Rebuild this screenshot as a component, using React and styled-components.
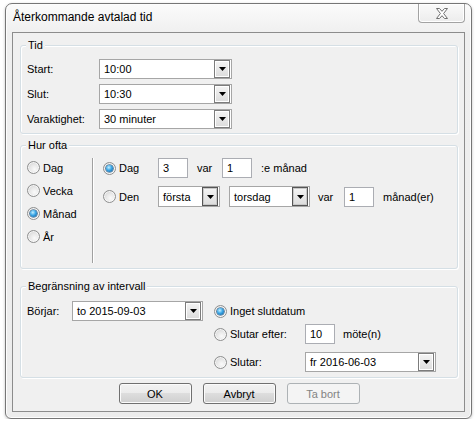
import React from 'react';
import styled, { createGlobalStyle, css } from 'styled-components';

const Global = createGlobalStyle`
  html, body { margin: 0; padding: 0; background: #fff; }
  body {
    font-family: "Liberation Sans", Arial, sans-serif;
    font-size: 11px;
    color: #000;
  }
  * { box-sizing: border-box; }
`;

const Page = styled.div`
  padding: 3px 0 0 5px;
`;

const Window = styled.div`
  width: 467px;
  height: 416px;
  border: 1px solid #767676;
  border-radius: 7px 7px 6px 6px;
  background: linear-gradient(#fbfbfb, #efefef 30px, #ececec);
  box-shadow: inset 0 0 0 1px #fdfdfd, 0 1px 3px rgba(0, 0, 0, 0.25);
  padding: 0 6px 6px;
  display: flex;
  flex-direction: column;
`;

const TitleBar = styled.div`
  height: 28px;
  display: flex;
  justify-content: space-between;
  align-items: flex-start;
`;

const Title = styled.div`
  font-family: "Liberation Sans", Arial, sans-serif;
  font-size: 12px;
  line-height: 14px;
  padding: 6px 0 0 1px;
  color: #000;
`;

const CloseButton = styled.div`
  width: 47px;
  height: 19px;
  border: 1px solid #a3a3a3;
  border-top: none;
  border-radius: 0 0 4px 4px;
  background: linear-gradient(#fafafa, #ececec);
  box-shadow: inset 0 0 0 1px #fff;
  display: flex;
  align-items: center;
  justify-content: center;
`;

const Client = styled.div`
  flex: 1;
  border: 1px solid #8c8c8c;
  background: #f0f0f0;
  padding: 0 6px 0 7px;
  display: flex;
  flex-direction: column;
`;

const Group = styled.div`
  position: relative;
  margin-top: ${(p) => p.$mt}px;
  height: ${(p) => p.$h}px;
  border: 1px solid #d5dfe5;
  border-radius: 3px;
  box-shadow: inset 1px 1px 0 #fff, 1px 1px 0 #fff;
  display: flex;
  flex-direction: column;
`;

const Legend = styled.span`
  position: absolute;
  top: -7px;
  left: 5px;
  padding: 0 2px;
  line-height: 13px;
  background: #f0f0f0;
  white-space: nowrap;
`;

const FormRow = styled.div`
  display: flex;
  align-items: center;
  height: ${(p) => p.$h || 20}px;
  margin-top: ${(p) => p.$mt || 0}px;
`;

const Text = styled.span`
  flex: none;
  width: ${(p) => (p.$w ? `${p.$w}px` : 'auto')};
  margin-left: ${(p) => p.$ml || 0}px;
  white-space: nowrap;
`;

const ComboBox = styled.div`
  flex: none;
  width: ${(p) => p.$w}px;
  height: ${(p) => p.$h || 20}px;
  margin-left: ${(p) => p.$ml || 0}px;
  border: 1px solid #a6a6a6;
  background: #fff;
  padding-right: 1px;
  display: flex;
  align-items: stretch;
`;

const ComboText = styled.span`
  flex: 1;
  padding-left: 4px;
  display: flex;
  align-items: center;
  white-space: nowrap;
  overflow: hidden;
`;

const DropButton = styled.span`
  width: 16px;
  flex: none;
  border: 1px solid ${(p) => (p.$dark ? '#555' : '#7c7c7c')};
  background: linear-gradient(#f4f4f4, #dcdcdc);
  box-shadow: inset 0 0 0 1px ${(p) => (p.$dark ? '#c8c8c8' : '#fff')};
  display: flex;
  align-items: center;
  justify-content: center;
`;

const TextBox = styled.div`
  flex: none;
  width: ${(p) => p.$w || 30}px;
  height: 20px;
  margin-left: ${(p) => p.$ml || 0}px;
  border: 1px solid #abadb3;
  background: #fff;
  padding-left: 4px;
  display: flex;
  align-items: center;
`;

const RadioLabel = styled.label`
  flex: none;
  display: flex;
  align-items: center;
  gap: 3px;
  white-space: nowrap;
  width: ${(p) => (p.$w ? `${p.$w}px` : 'auto')};
  height: ${(p) => (p.$h ? `${p.$h}px` : 'auto')};
`;

const RadioDot = styled.span`
  position: relative;
  flex: none;
  width: 13px;
  height: 13px;
  border-radius: 50%;
  border: 1px solid #8e8f8f;
  background: radial-gradient(circle at 60% 65%, #fafafa 0, #e8e8e8 45%, #c9c9c9 100%);
  box-shadow: inset 0 0 0 1px rgba(255, 255, 255, 0.7);
  ${(p) =>
    p.$on &&
    css`
      &::after {
        content: '';
        position: absolute;
        left: 2px;
        top: 2px;
        width: 7px;
        height: 7px;
        border-radius: 50%;
        background: radial-gradient(circle at 40% 35%, #c6f0ff 0, #3aa6e6 45%, #0c528f 100%);
        box-shadow: 0 0 0 0.6px #1a4d78;
      }
    `}
`;

const HurBody = styled.div`
  display: flex;
  flex: 1;
  padding: 10px 0 0 6px;
`;

const FreqColumn = styled.div`
  width: 65px;
  flex: none;
  display: flex;
  flex-direction: column;
`;

const PatternColumn = styled.div`
  flex: 1;
  margin: 2px 0 5px;
  border-left: 1px solid #a0a0a0;
  box-shadow: inset 1px 0 0 #fff;
  padding-left: 10px;
  display: flex;
  flex-direction: column;
`;

const TidBody = styled.div`
  display: flex;
  flex-direction: column;
  gap: 5px;
  padding: 13px 0 0 6px;
`;

const RangeBody = styled.div`
  display: flex;
  padding: 14px 0 0 6px;
  align-items: flex-start;
`;

const EndColumn = styled.div`
  margin-left: 11px;
  display: flex;
  flex-direction: column;
`;

const ButtonRow = styled.div`
  margin-top: 5px;
  display: flex;
  justify-content: center;
  gap: 11px;
`;

const Button = styled.div`
  width: 73px;
  height: 21px;
  border-radius: 3px;
  display: flex;
  align-items: center;
  justify-content: center;
  border: 1px solid #707070;
  background: linear-gradient(#f2f2f2 0%, #ebebeb 50%, #dddddd 50%, #cfcfcf 100%);
  box-shadow: inset 0 0 0 1px #fbfbfb;
  color: #000;
  ${(p) =>
    p.$disabled &&
    css`
      border-color: #adb2b5;
      background: #f4f4f4;
      box-shadow: none;
      color: #838383;
    `}
`;

const Arrow = () => (
  <svg width="7" height="4" viewBox="0 0 7 4">
    <polygon points="0,0 7,0 3.5,4" fill="#000" />
  </svg>
);

const Combo = ({ value, w, h, ml, dark }) => (
  <ComboBox $w={w} $h={h} $ml={ml}>
    <ComboText>{value}</ComboText>
    <DropButton $dark={dark}>
      <Arrow />
    </DropButton>
  </ComboBox>
);

const Radio = ({ on, children, w, h }) => (
  <RadioLabel $w={w} $h={h}>
    <RadioDot $on={on} />
    <span>{children}</span>
  </RadioLabel>
);

const CloseGlyph = () => (
  <svg width="14" height="11" viewBox="0 0 14 11">
    <path
      d="M1.5,0.5 H4.5 L7,3.3 L9.5,0.5 H12.5 L8.6,5.5 L12.5,10.5 H9.5 L7,7.7 L4.5,10.5 H1.5 L5.4,5.5 Z"
      fill="#fff"
      stroke="#6f6f6f"
      strokeWidth="1"
      strokeLinejoin="round"
    />
  </svg>
);

export default function App() {
  return (
    <Page>
      <Global />
      <Window>
        <TitleBar>
          <Title>Återkommande avtalad tid</Title>
          <CloseButton>
            <CloseGlyph />
          </CloseButton>
        </TitleBar>
        <Client>
          <Group $mt={12} $h={89}>
            <Legend>Tid</Legend>
            <TidBody>
              <FormRow>
                <Text $w={72}>Start:</Text>
                <Combo value="10:00" w={133} />
              </FormRow>
              <FormRow>
                <Text $w={72}>Slut:</Text>
                <Combo value="10:30" w={133} />
              </FormRow>
              <FormRow>
                <Text $w={72}>Varaktighet:</Text>
                <Combo value="30 minuter" w={133} />
              </FormRow>
            </TidBody>
          </Group>

          <Group $mt={11} $h={124}>
            <Legend>Hur ofta</Legend>
            <HurBody>
              <FreqColumn>
                <Radio h={23}>Dag</Radio>
                <Radio h={23}>Vecka</Radio>
                <Radio h={23} on>Månad</Radio>
                <Radio h={23}>År</Radio>
              </FreqColumn>
              <PatternColumn>
                <FormRow>
                  <Radio w={55} on>Dag</Radio>
                  <TextBox>3</TextBox>
                  <Text $ml={9} $w={25}>var</Text>
                  <TextBox>1</TextBox>
                  <Text $ml={9}>:e månad</Text>
                </FormRow>
                <FormRow $h={21} $mt={8}>
                  <Radio w={55}>Den</Radio>
                  <Combo value="första" w={62} h={21} dark />
                  <Combo value="torsdag" w={81} h={21} ml={9} dark />
                  <Text $ml={8} $w={26}>var</Text>
                  <TextBox>1</TextBox>
                  <Text $ml={9}>månad(er)</Text>
                </FormRow>
              </PatternColumn>
            </HurBody>
          </Group>

          <Group $mt={17} $h={92}>
            <Legend>Begränsning av intervall</Legend>
            <RangeBody>
              <FormRow>
                <Text $w={45}>Börjar:</Text>
                <Combo value="to 2015-09-03" w={131} />
              </FormRow>
              <EndColumn>
                <FormRow>
                  <Radio on>Inget slutdatum</Radio>
                </FormRow>
                <FormRow $mt={3}>
                  <Radio w={91}>Slutar efter:</Radio>
                  <TextBox>10</TextBox>
                  <Text $ml={8}>möte(n)</Text>
                </FormRow>
                <FormRow $mt={8}>
                  <Radio w={91}>Slutar:</Radio>
                  <Combo value="fr 2016-06-03" w={131} />
                </FormRow>
              </EndColumn>
            </RangeBody>
          </Group>

          <ButtonRow>
            <Button>OK</Button>
            <Button>Avbryt</Button>
            <Button $disabled>Ta bort</Button>
          </ButtonRow>
        </Client>
      </Window>
    </Page>
  );
}
